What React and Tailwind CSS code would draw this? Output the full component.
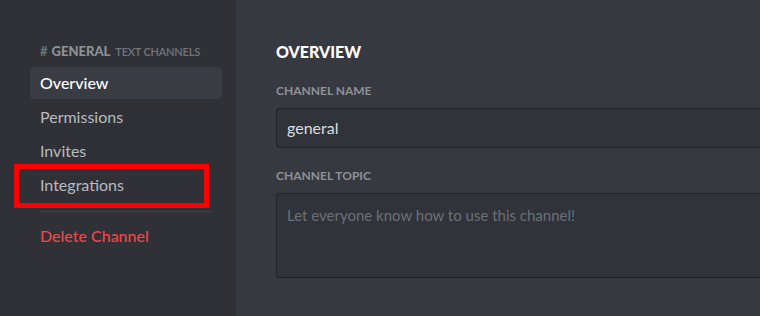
export default function App() {
  const items = ["Overview", "Permissions", "Invites", "Integrations"];

  return (
    <div
      className="flex h-[316px] w-[760px] overflow-hidden bg-[#36393f]"
      style={{ fontFamily: "Lato, 'Open Sans', sans-serif" }}
    >
      {/* sidebar */}
      <div className="w-[236px] shrink-0 bg-[#2f3136] pt-[43px] pl-[30px] pr-[14px]">
        <div className="flex h-[16px] items-baseline px-[10px] leading-[16px] text-[#72767d]">
          <span className="text-[13px] font-bold">#</span>
          <span className="ml-[4px] text-[13px] font-black text-[#8e9297]">GENERAL</span>
          <span className="ml-[5px] text-[11px] font-semibold tracking-[-0.2px]">TEXT CHANNELS</span>
        </div>
        <div className="mt-[8px] flex flex-col gap-[2px]">
          {items.map((label) => {
            const active = label === "Overview";
            const boxed = label === "Integrations";
            return (
              <div
                key={label}
                className={
                  boxed
                    ? "relative flex h-[32px] items-center rounded-[3px] px-[10px] text-[16px] text-[#b9bbbe]"
                    : active
                    ? "flex h-[32px] items-center rounded-[4px] bg-[#393c43] px-[10px] text-[16px] font-medium text-white"
                    : "flex h-[32px] items-center rounded-[3px] px-[10px] text-[16px] text-[#b9bbbe]"
                }
              >
                {label}
                {boxed && (
                  <div className="absolute left-[-16px] top-[-5px] h-[44px] w-[195px] border-[5px] border-[#ff0000]" />
                )}
              </div>
            );
          })}
        </div>
        <div className="mx-[10px] mt-[10px] h-px bg-[#3f4147]" />
        <div className="mt-[8px] flex h-[32px] items-center px-[10px] text-[16px] font-medium text-[#f04747]">
          Delete Channel
        </div>
      </div>

      {/* content */}
      <div className="flex-1 pt-[42px] pl-[40px]">
        <h2 className="text-[16px] font-black leading-[20px] text-white">OVERVIEW</h2>
        <div className="mt-[21px] text-[12px] font-bold leading-[16px] text-[#8e9297]">CHANNEL NAME</div>
        <div className="mt-[9px] flex h-[40px] w-[600px] items-center rounded-[3px] border border-[#222428] bg-[#303339] px-[10px] text-[16px] text-[#dcddde]">
          general
        </div>
        <div className="mt-[20px] text-[12px] font-bold leading-[16px] text-[#8e9297]">CHANNEL TOPIC</div>
        <div className="mt-[9px] h-[85px] w-[600px] rounded-[3px] border border-[#222428] bg-[#303339] px-[10px] pt-[10px] text-[15px] text-[#6c7077]">
          Let everyone know how to use this channel!
        </div>
      </div>
    </div>
  );
}
